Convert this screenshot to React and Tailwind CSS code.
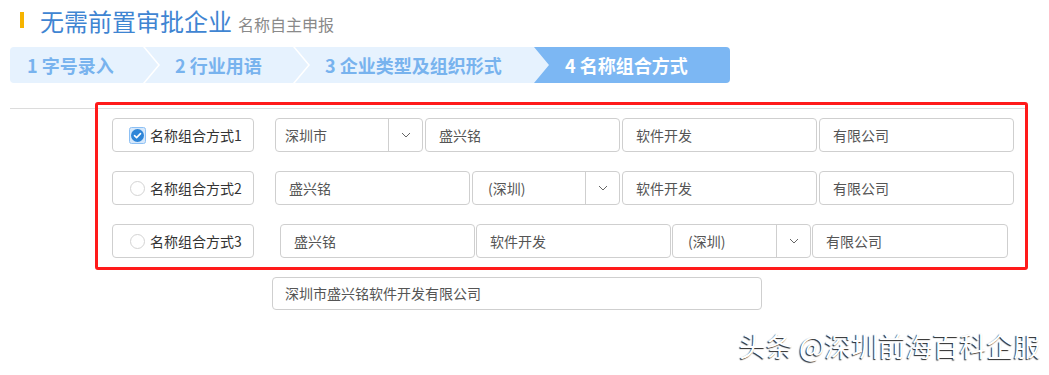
import React from "react";

const font = { fontFamily: '"Noto Sans CJK SC", "Noto Sans", sans-serif' };

function Chevron() {
  return (
    <svg width="10" height="6" viewBox="0 0 10 6" fill="none">
      <path d="M1 1 L5 5 L9 1" stroke="#666" strokeWidth="1" />
    </svg>
  );
}

function Select({ text, w, pl }) {
  return (
    <div className={`flex h-[34px] shrink-0 rounded-[4px] border border-[#cfcfcf] bg-white ${w}`}>
      <div className={`flex flex-1 items-center text-[14px] text-[#555] ${pl}`}>{text}</div>
      <div className="flex w-[34px] items-center justify-center border-l border-[#cfcfcf]">
        <Chevron />
      </div>
    </div>
  );
}

function Input({ text, w = "w-[195px]" }) {
  return (
    <div className={`flex h-[34px] shrink-0 items-center rounded-[4px] border border-[#cfcfcf] bg-white pl-[13px] text-[14px] text-[#555] ${w}`}>
      {text}
    </div>
  );
}

function Checked() {
  return (
    <svg width="17" height="17" viewBox="0 0 17 17">
      <rect x="0.5" y="0.5" width="16" height="16" rx="2" fill="#d6e8fb" stroke="#8dc0f4" />
      <circle cx="8.5" cy="8.5" r="6.5" fill="#2e85d8" />
      <path d="M5.5 8.7 L7.6 10.6 L11.5 6.6" stroke="#fff" strokeWidth="1.6" fill="none" strokeLinecap="round" strokeLinejoin="round" />
    </svg>
  );
}

function Radio() {
  return (
    <svg width="17" height="17" viewBox="0 0 17 17">
      <circle cx="8.5" cy="8.5" r="7" fill="#fff" stroke="#d3d3d3" />
    </svg>
  );
}

function Label({ checked, n }) {
  return (
    <div className="flex h-[34px] w-[142px] shrink-0 items-center rounded-[4px] border border-[#cfcfcf] bg-white pl-[16px]">
      {checked ? <Checked /> : <Radio />}
      <span className="ml-[4px] text-[14px] text-[#333]">名称组合方式{n}</span>
    </div>
  );
}

export default function App() {
  return (
    <div className="relative h-[375px] w-[1049px] overflow-hidden bg-white" style={font}>
      {/* header */}
      <div className="flex h-[45px] items-start pl-[20px]">
        <div className="mt-[12px] h-[16px] w-[4px] bg-[#f6b400]" />
        <div className="ml-[16px] mt-[6px] flex items-baseline">
          <span className="text-[24px] leading-[30px] text-[#3f85d2]">无需前置审批企业</span>
          <span className="ml-[6px] text-[16px] text-[#8a8a8a]">名称自主申报</span>
        </div>
      </div>

      {/* steps */}
      <div className="ml-[10px] mt-[2px] flex h-[36px] font-bold">
        <div className="flex h-full w-[148px] shrink-0 items-center rounded-l-[4px] bg-[#e6f2fe] pl-[17px] text-[18px] text-[#78b3ee] [clip-path:polygon(0_0,133px_0,148px_50%,133px_100%,0_100%)]">
          1 字号录入
        </div>
        <div className="ml-[-13px] flex h-full w-[163px] shrink-0 items-center bg-[#e6f2fe] pl-[30px] text-[18px] text-[#78b3ee] [clip-path:polygon(0_0,148px_0,163px_50%,148px_100%,0_100%,15px_50%)]">
          2 行业用语
        </div>
        <div className="relative z-10 ml-[-13px] flex h-full w-[254px] shrink-0 items-center bg-[#e6f2fe] pl-[30px] text-[18px] text-[#78b3ee] [clip-path:polygon(0_0,239px_0,254px_50%,239px_100%,0_100%,15px_50%)]">
          3 企业类型及组织形式
        </div>
        <div className="ml-[-15px] flex h-full w-[196px] shrink-0 items-center rounded-r-[4px] bg-[#7cb7f3] pl-[31px] text-[18px] text-white">
          4 名称组合方式
        </div>
      </div>

      {/* form */}
      <div className="ml-[10px] mt-[25px] w-[1015px] border-t border-[#dcdcdc] pt-[9px]">
        <div className="flex flex-col gap-[19px]">
          <div className="flex pl-[102px]">
            <Label checked n="1" />
            <div className="ml-[21px] flex gap-[2px]">
              <Select text="深圳市" w="w-[148px]" pl="pl-[9px]" />
              <Input text="盛兴铭" />
              <Input text="软件开发" />
              <Input text="有限公司" />
            </div>
          </div>
          <div className="flex pl-[102px]">
            <Label n="2" />
            <div className="ml-[21px] flex gap-[2px]">
              <Input text="盛兴铭" />
              <Select text="(深圳)" w="w-[148px]" pl="pl-[15px]" />
              <Input text="软件开发" />
              <Input text="有限公司" />
            </div>
          </div>
          <div className="flex pl-[102px]">
            <Label n="3" />
            <div className="ml-[26px] flex gap-[1px]">
              <Input text="盛兴铭" />
              <Input text="软件开发" />
              <Select text="(深圳)" w="w-[139px]" pl="pl-[15px]" />
              <Input text="有限公司" w="w-[196px]" />
            </div>
          </div>
        </div>
        <div className="ml-[262px] mt-[19px] flex h-[33px] w-[490px] items-center rounded-[4px] border border-[#cfcfcf] pl-[12px] text-[14px] text-[#555]">
          深圳市盛兴铭软件开发有限公司
        </div>
      </div>

      {/* red annotation */}
      <div className="pointer-events-none absolute left-[95px] top-[102px] h-[168px] w-[933px] rounded-[3px] border-[3px] border-[#ff1a1a]" />

      {/* watermark */}
      <div className="absolute left-[739px] top-[329px] text-[27px] leading-[34px] text-white [text-shadow:-1px_1px_1px_rgba(0,0,0,0.85)]">
        头条 @深圳前海百科企服
      </div>
    </div>
  );
}
